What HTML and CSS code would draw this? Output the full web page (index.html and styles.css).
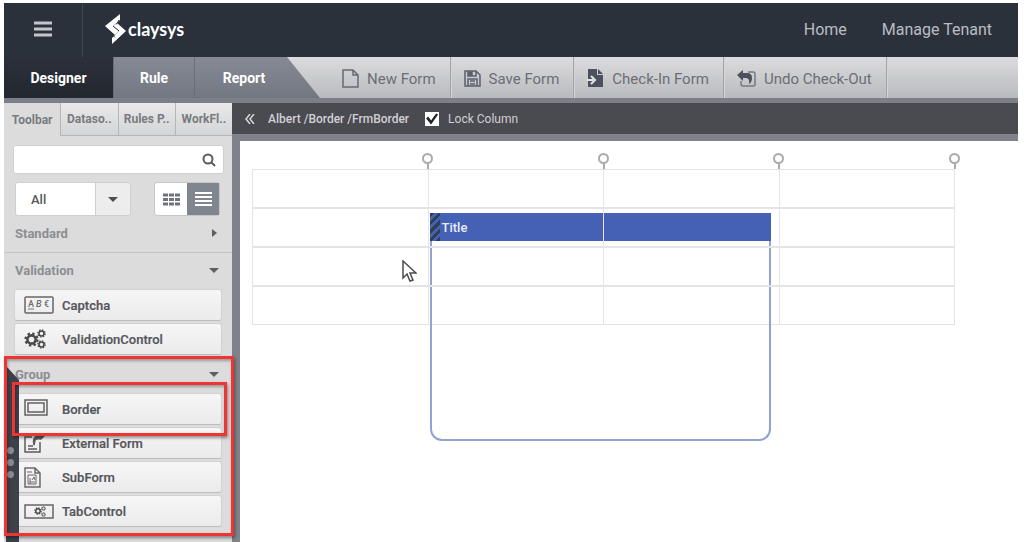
FILE: index.html
```
<!DOCTYPE html>
<html lang="en">
<head>
<meta charset="UTF-8">
<meta name="viewport" content="width=device-width, initial-scale=1.0">
<title>Claysys Form Designer</title>
<link rel="stylesheet" href="styles.css">
</head>
<body>

<!-- shared icons -->
<svg class="defs" width="0" height="0" aria-hidden="true">
  <symbol id="gear" viewBox="-10 -10 20 20">
    <circle r="5.5" fill="none" stroke="currentColor" stroke-width="3.5"/>
    <circle r="8" fill="none" stroke="currentColor" stroke-width="3" stroke-dasharray="3.2 3.083"/>
  </symbol>
</svg>

<div class="app">
  <header class="header">
    <button class="menu-button" aria-label="Menu">
      <svg width="18" height="16" viewBox="0 0 18 16"><path d="M0 2h18M0 8h18M0 14h18" stroke="#c3c7cc" stroke-width="3"/></svg>
    </button>
    <a class="logo" href="#">
      <svg width="22" height="30" viewBox="0 0 22 30" fill="#fff">
        <path d="M15 0v6L8 12l6 5-4 4L0 12z"/>
        <path d="M7 30v-6l7-7-6-5 4-3 9 8z"/>
        <path d="M8 12l6 5" stroke="#2b313b" stroke-width="1"/>
        <path d="M14 6l-3 5M7 19l3 5" stroke="#2b313b" stroke-width="1" stroke-dasharray="2 1"/>
      </svg>
      <span>claysys</span>
    </a>
    <nav class="header-nav">
      <a href="#">Home</a>
      <a href="#">Manage Tenant</a>
    </nav>
  </header>

  <div class="toolbar">
    <div class="modes">
      <button class="mode active">Designer</button>
      <button class="mode">Rule</button>
      <button class="mode mode-last">Report</button>
    </div>
    <div class="actions">
      <button class="action">
        <svg width="17" height="20" viewBox="0 0 17 20" fill="none" stroke="#676a73" stroke-width="1.5"><path d="M1 1h10l5 5v12H1zM11 1v5h5"/></svg>
        New Form
      </button>
      <button class="action">
        <svg width="17" height="17" viewBox="0 0 17 17" fill="none" stroke="#5b5f69" stroke-width="1.5"><path d="M1 1h11l4 4v11H1zM4 1v5h8V1M4 16V9h9v7M6 11h5M6 14h5"/><path d="M5 2h3v3H5z" fill="#5b5f69"/></svg>
        Save Form
      </button>
      <button class="action">
        <svg width="17" height="19" viewBox="0 0 17 19"><path d="M1 0h9v6h6v12H1z" fill="#4d515e"/><path d="M11 0l5 5h-5z" fill="#4d515e"/><path d="M0 11h6M4 7l4 4-4 4" fill="none" stroke="#e3e4e7" stroke-width="2"/></svg>
        Check-In Form
      </button>
      <button class="action">
        <svg width="19" height="18" viewBox="0 0 19 18"><path d="M11 2h5q2 0 2 2v10q0 2-2 2H6q-2 0-2-2v-3" fill="none" stroke="#777a83" stroke-width="1.5"/><path d="M0 5l6-5v3h4q5 0 5 5 0 4-3 6 1-6-3-6H6v3z" fill="#4d515e"/></svg>
        Undo Check-Out
      </button>
    </div>
  </div>

  <div class="main">
    <aside class="sidebar">
      <div class="side-tabs">
        <button class="side-tab active">Toolbar</button>
        <button class="side-tab">Dataso..</button>
        <button class="side-tab">Rules P..</button>
        <button class="side-tab">WorkFl..</button>
      </div>

      <div class="search">
        <input type="text" aria-label="Search controls">
        <button aria-label="Search">
          <svg width="14" height="14" viewBox="0 0 14 14" fill="none" stroke="#5c5c5c" stroke-width="2"><circle cx="6" cy="6" r="4.5"/><path d="M9 9l4 4"/></svg>
        </button>
      </div>

      <div class="filters">
        <div class="filter-select">
          <select aria-label="Filter">
            <option selected>All</option>
            <option>Standard</option>
            <option>Validation</option>
            <option>Group</option>
          </select>
        </div>
        <div class="view-toggle">
          <button aria-label="Grid view">
            <svg width="17" height="13" viewBox="0 0 17 13"><path d="M0 2h17M0 6.5h17M0 11h17" stroke="#6d727c" stroke-width="3" stroke-dasharray="5 1"/></svg>
          </button>
          <button class="active" aria-label="List view">
            <svg width="17" height="14" viewBox="0 0 17 14"><path d="M0 1h17M0 5h17M0 9h17M0 13h17" stroke="#fff" stroke-width="2"/></svg>
          </button>
        </div>
      </div>

      <section class="section">
        <button class="section-title">Standard <i class="arrow-right"></i></button>
      </section>

      <section class="section">
        <button class="section-title">Validation <i class="arrow-down"></i></button>
        <button class="control">
          <span class="control-icon"><svg width="30" height="18" viewBox="0 0 30 18"><rect x="1" y="1" width="28" height="16" rx="1" fill="none" stroke="#676767" stroke-width="1.5"/><text x="4" y="11" class="abc">A</text><text x="12" y="11" class="abc abc-italic">B</text><text x="20" y="11" class="abc">&#8364;</text><path d="M4 13h6" stroke="#777"/></svg></span>
          Captcha
        </button>
        <button class="control">
          <span class="control-icon"><svg width="22" height="20" viewBox="0 0 22 20" color="#4a4a4a"><use href="#gear" x="0" y="3" width="15" height="15"/><use href="#gear" x="13" y="0" width="9" height="9"/><use href="#gear" x="13" y="11" width="9" height="9"/></svg></span>
          ValidationControl
        </button>
      </section>

      <section class="section section-group">
        <button class="section-title">Group <i class="arrow-down"></i></button>
        <button class="control">
          <span class="control-icon"><svg width="24" height="21" viewBox="0 0 24 21" fill="none" stroke="#626262" stroke-width="1.5"><rect x="1" y="1" width="22" height="15"/><rect x="4" y="4" width="16" height="9"/></svg></span>
          Border
        </button>
        <button class="control">
          <span class="control-icon"><svg width="22" height="19" viewBox="0 0 22 19" fill="none" stroke="#5c5c5c" stroke-width="1.5"><path d="M8 3H1v15h15V8M4 12h5M4 15h9"/><path d="M10 11q-2-9 5-9l6-1-4 4q-4-1-6 1z" fill="#5c5c5c"/></svg></span>
          External Form
        </button>
        <button class="control">
          <span class="control-icon"><svg width="17" height="21" viewBox="0 0 17 21" fill="none" stroke="#6a6a6a"><path d="M1 1h10l5 5v14H1zM11 1v5h5" stroke-width="1.5"/><path d="M3 5h5M4 8h8v9H4zM6 11v4h5M8 13l2-3 1 3M6 17v-2"/></svg></span>
          SubForm
        </button>
        <button class="control">
          <span class="control-icon"><svg width="30" height="15" viewBox="0 0 30 15" color="#4a4a4a"><rect x="1" y="1" width="28" height="13" fill="none" stroke="#676767" stroke-width="1.5"/><use href="#gear" x="10" y="3" width="8" height="8"/><use href="#gear" x="17" y="2" width="5" height="5"/><use href="#gear" x="17" y="8" width="5" height="5"/></svg></span>
          TabControl
        </button>
        <div class="drag-handle"><i></i><i></i><i></i></div>
        <div class="highlight highlight-group"></div>
        <div class="highlight highlight-border"></div>
      </section>

      <section class="section">
        <button class="section-title">Data</button>
      </section>
    </aside>

    <main class="workspace">
      <div class="form-bar">
        <button class="collapse" aria-label="Collapse sidebar">
          <svg width="10" height="10" viewBox="0 0 10 10" fill="none" stroke="#d6d6da" stroke-width="1.5"><path d="M5 0L1 5l4 5M9 0L5 5l4 5"/></svg>
        </button>
        <span class="path">Albert /Border /FrmBorder</span>
        <input type="checkbox" id="lockColumn" checked>
        <label for="lockColumn">Lock Column</label>
      </div>
      <div class="canvas">
        <div class="pins"><i></i><i></i><i></i><i></i></div>
        <div class="form-grid">
          <div class="cell"></div><div class="cell"></div><div class="cell"></div><div class="cell"></div>
          <div class="cell"></div><div class="cell"></div><div class="cell"></div><div class="cell"></div>
          <div class="cell"></div><div class="cell"></div><div class="cell"></div><div class="cell"></div>
          <div class="cell"></div><div class="cell"></div><div class="cell"></div><div class="cell"></div>
          <div class="border-control">
            <div class="border-title">Title</div>
          </div>
          <svg class="cursor" width="15" height="22" viewBox="0 0 15 22"><path d="M1 1v17l4-4 3 7 3-1-3-7h6z" fill="#fff" stroke="#4a4a52" stroke-width="1.5"/></svg>
        </div>
      </div>
    </main>
  </div>
</div>

</body>
</html>
```
FILE: styles.css
```
* {
  box-sizing: border-box;
}
body {
  margin: 0;
  background: #fff;
  font-family: Roboto, "Liberation Sans", sans-serif;
  font-size: 13px;
}
button, input, select {
  font: inherit;
  color: inherit;
  border: 0;
  margin: 0;
  padding: 0;
  background: none;
}
a {
  color: inherit;
  text-decoration: none;
}
svg {
  display: block;
  flex: none;
}
.defs {
  position: absolute;
}
.app {
  display: flex;
  flex-direction: column;
  height: 100vh;
  padding: 3px 6px 0 4px;
  overflow: hidden;
}

/* header */
.header {
  display: flex;
  flex: none;
  height: 54px;
  background: #2b313b;
}
.menu-button {
  display: flex;
  align-items: center;
  justify-content: center;
  width: 79px;
  padding-bottom: 3px;
  border-right: 1px solid #414751;
}
.logo {
  display: flex;
  align-items: center;
  gap: 1px;
  margin-left: 22px;
  padding-bottom: 3px;
  color: #fff;
  font-family: Lato, sans-serif;
  font-size: 18px;
  font-weight: bold;
}
.header-nav {
  display: flex;
  align-items: center;
  gap: 35px;
  margin-left: auto;
  padding: 0 26px 2px 0;
  color: #b9bdc3;
  font-size: 16px;
}

/* toolbar */
.toolbar {
  display: flex;
  flex: none;
  height: 46px;
  border-bottom: 5px solid #7c7f88;
  background: linear-gradient(#dcdcdf, #b9babd);
}
.modes {
  display: flex;
  width: 316px;
  background: linear-gradient(#868a94, #737782);
  clip-path: polygon(0 0, 283px 0, 100% 100%, 0 100%);
}
.mode {
  width: 81px;
  border-right: 1px solid #6a6e79;
  color: #fff;
  font-size: 14px;
  font-weight: bold;
}
.mode.active {
  width: 110px;
  background: linear-gradient(#2b303a, #23272f);
}
.mode.mode-last {
  width: 98px;
  border-right: 0;
}
.actions {
  display: flex;
}
.action {
  display: flex;
  align-items: center;
  gap: 8px;
  padding: 2px 14px 0 13px;
  border-right: 1px solid #a2a4a9;
  box-shadow: 1px 0 #d3d4d7;
  color: #6b6e76;
  font-size: 15px;
}
.action:first-child {
  padding-left: 22px;
}

/* sidebar */
.main {
  display: flex;
  flex: 1;
  min-height: 0;
}
.sidebar {
  flex: none;
  width: 228px;
  background: #dcdcdc;
}
.side-tabs {
  display: flex;
  height: 33px;
}
.side-tab {
  flex: 1;
  border-left: 1px solid #b4b6ba;
  border-bottom: 1px solid #b4b6ba;
  background: linear-gradient(#e9e9ea, #d4d5d7);
  color: #797b80;
  font-size: 12px;
  font-weight: bold;
  white-space: nowrap;
}
.side-tab.active {
  border: 0;
  background: none;
}
.search {
  display: flex;
  height: 29px;
  margin: 9px 8px 0 9px;
  border: 1px solid #cfcfcf;
  border-radius: 3px;
  background: #fff;
}
.search input {
  flex: 1;
  min-width: 0;
  padding-left: 8px;
}
.search button {
  padding: 0 7px;
}
.filters {
  display: flex;
  justify-content: space-between;
  height: 34px;
  margin: 8px 12px 0 11px;
}
.filter-select {
  position: relative;
  width: 116px;
  border: 1px solid #cfcfcf;
  border-radius: 3px;
  background: linear-gradient(to right, #fff 79px, #cfcfcf 79px, #cfcfcf 80px, #ededee 80px);
}
.filter-select::after {
  content: "";
  position: absolute;
  top: 14px;
  right: 12px;
  border: 5px solid transparent;
  border-top-color: #4c4f55;
  border-bottom: 0;
  pointer-events: none;
}
.filter-select select {
  appearance: none;
  width: 100%;
  height: 100%;
  padding-left: 15px;
  color: #55575c;
  font-weight: 500;
}
.view-toggle {
  display: flex;
  width: 66px;
  border: 1px solid #c4c6ca;
  border-radius: 3px;
  background: #fff;
}
.view-toggle button {
  display: flex;
  flex: 1;
  align-items: center;
  justify-content: center;
}
.view-toggle .active {
  background: #7f8690;
}
.section {
  position: relative;
}
.section-title {
  display: flex;
  align-items: center;
  justify-content: space-between;
  width: 100%;
  height: 36px;
  padding: 0 13px 2px 11px;
  color: #8c8e92;
  font-weight: bold;
}
.section:first-of-type {
  border-bottom: 1px solid #c3c3c3;
}
.arrow-down {
  border: 5px solid transparent;
  border-top-color: #5c5e63;
  border-bottom: 0;
}
.arrow-right {
  margin-right: 2px;
  border: 4px solid transparent;
  border-left: 5px solid #5c5e63;
  border-right: 0;
}
.control {
  display: flex;
  align-items: center;
  width: calc(100% - 20px);
  height: 32px;
  margin: 0 10px 2px;
  padding-left: 9px;
  border: 1px solid #d2d2d2;
  border-bottom-color: #bdbdbd;
  border-radius: 3px;
  background: linear-gradient(#f6f6f6, #ebebec);
  color: #55565a;
  font-weight: 500;
  -webkit-text-stroke: 0.2px #55565a;
}
.control-icon {
  width: 38px;
}
.abc {
  fill: #6a6a6a;
  font-size: 9px;
}
.abc-italic {
  font-style: italic;
}

/* handle and highlight boxes lie over the list */
.drag-handle {
  position: absolute;
  top: 9px;
  bottom: -20px;
  left: 2px;
  display: flex;
  flex-direction: column;
  align-items: center;
  justify-content: center;
  gap: 5px;
  width: 13px;
  padding: 12px 4px 0 0;
  background: #3c414a;
  clip-path: polygon(0 0, 100% 14px, 100% 100%, 0 100%);
}
.drag-handle i {
  width: 7px;
  height: 7px;
  border-radius: 50%;
  background: #868a91;
}
.highlight {
  position: absolute;
  border: 3px solid #ef3434;
  box-shadow: 1px 2px 3px rgba(0, 0, 0, 0.4), inset 1px 2px 3px rgba(0, 0, 0, 0.3);
  pointer-events: none;
}
.highlight-group {
  top: -1px;
  right: -2px;
  bottom: -9px;
  left: 0;
}
.highlight-border {
  top: 25px;
  right: 5px;
  left: 8px;
  height: 54px;
}

/* workspace */
.workspace {
  display: flex;
  flex: 1;
  flex-direction: column;
}
.form-bar {
  display: flex;
  align-items: center;
  height: 38px;
  padding-left: 13px;
  border-bottom: 7px solid #7f828a;
  background: #4a4a51;
  color: #d0d0d4;
  font-size: 12px;
}
.path {
  margin: 0 16px 0 13px;
  font-weight: 500;
}
.form-bar input {
  appearance: none;
  width: 14px;
  height: 14px;
  margin-right: 9px;
  background: #fff;
}
.form-bar input:checked::before {
  content: "";
  display: block;
  width: 14px;
  height: 14px;
  background: #222;
  clip-path: polygon(1px 7px, 3px 5px, 6px 9px, 11px 2px, 13px 3px, 6px 13px);
}
.canvas {
  flex: 1;
  padding: 12px 63px 0 12px;
  border-left: 8px solid #7f828a;
}
.pins {
  display: grid;
  grid-template-columns: repeat(4, 1fr);
  height: 16px;
}
.pins i {
  justify-self: end;
  width: 11px;
  height: 11px;
  margin-right: -5px;
  border: 2px solid #a9a9b0;
  border-radius: 50%;
}
.pins i::after {
  content: "";
  display: block;
  width: 2px;
  height: 5px;
  margin: 9px 0 0 3px;
  background: #a9a9b0;
}
.form-grid {
  position: relative;
  display: grid;
  grid-template-columns: repeat(4, 1fr);
  grid-template-rows: 38px;
  grid-auto-rows: 39px;
  border: 1px solid #e4e4e7;
  border-width: 0 1px 1px 0;
}
.cell {
  z-index: 1;
  border-top: 2px solid #e4e4e6;
  border-left: 1px solid #e4e4e7;
}
.cell:nth-child(-n+4) {
  border-top-width: 1px;
}
.border-control {
  position: absolute;
  top: 44px;
  left: calc(25% + 2px);
  width: calc(50% - 10px);
  height: 228px;
  border: 2px solid #91a2d3;
  border-top: 0;
  border-radius: 0 0 12px 12px;
}
.border-title {
  height: 28px;
  margin: 0 -2px;
  padding-left: 12px;
  background: repeating-linear-gradient(135deg, #2f4055 0 3px, #4461b5 3px 6px) left / 10px 100% no-repeat #4461b5;
  color: #e8ecf8;
  font-weight: 500;
  line-height: 30px;
}
.cursor {
  position: absolute;
  top: 91px;
  left: calc(25% - 26px);
  z-index: 2;
}
```
